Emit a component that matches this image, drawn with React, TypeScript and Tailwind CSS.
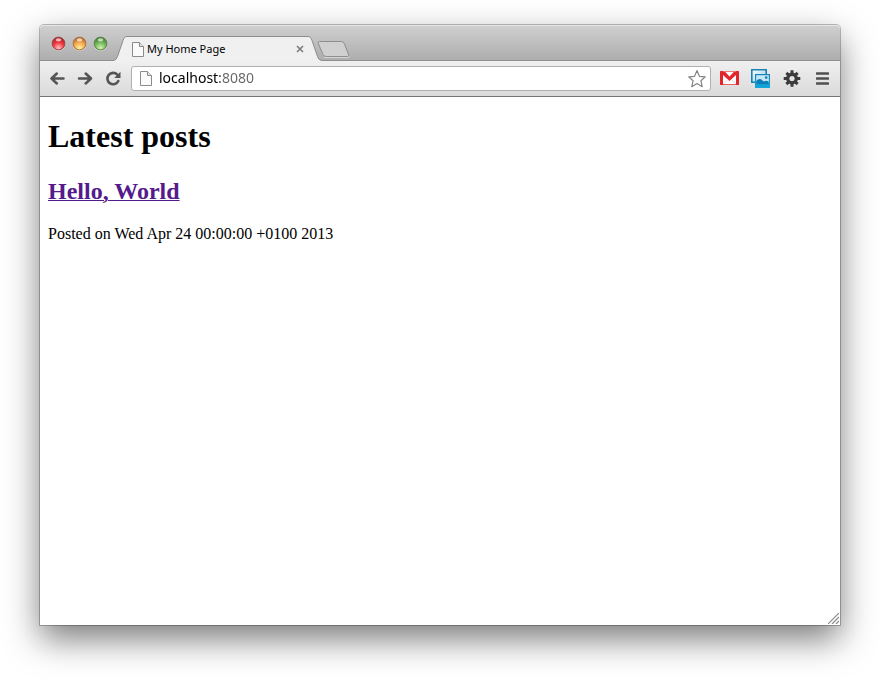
import { useState } from "react";
import type { ReactNode } from "react";

function TrafficLight({ label, id, rim, dark, mid, light }: { label: string; id: string; rim: string; dark: string; mid: string; light: string }) {
  return (
    <button type="button" aria-label={label} className="block size-[15px]">
      <svg viewBox="0 0 15 15" className="block size-[15px]">
        <defs>
          <radialGradient id={id} cx="0.5" cy="0.85" r="0.8">
            <stop offset="0" stopColor={light} />
            <stop offset="0.55" stopColor={mid} />
            <stop offset="1" stopColor={dark} />
          </radialGradient>
        </defs>
        <circle cx="7.5" cy="8.200" r="6.800" fill="#fff" opacity="0.5" />
        <circle cx="7.5" cy="7.500" r="6.400" fill={`url(#${id})`} stroke={rim} />
        <ellipse cx="7.5" cy="3.800" rx="2.800" ry="1.600" fill="#fff" opacity="0.65" />
      </svg>
    </button>
  );
}

function PageIcon() {
  return (
    <svg viewBox="0 0 12 15" className="block h-[15px] w-3 shrink-0">
      <path d="M.5 .5h7l4 4v10H.5z" fill="#fafafa" stroke="#8b8b8b" />
      <path d="M7.5 .5v4h4" fill="#e4e4e4" stroke="#8b8b8b" />
    </svg>
  );
}

function ToolButton({ label, wide, children }: { label: string; wide?: boolean; children: ReactNode }) {
  return (
    <button type="button" aria-label={label} className={`flex h-7 shrink-0 items-center justify-center ${wide ? "w-[31px]" : "w-7"}`}>
      {children}
    </button>
  );
}

function TabStrip() {
  return (
    <div className="flex h-9 items-end rounded-t-[4px] border-t border-[#e6e6e6] bg-linear-to-b from-[#cfcfcf] to-[#adadad] shadow-[inset_0_-1px_0_#8f8f8f]">
      <div className="flex gap-[6px] self-start pt-[10px] pl-[11px]">
        <TrafficLight label="Close" id="lightRed" rim="#9c4648" dark="#a3262b" mid="#f0373c" light="#ffc4c4" />
        <TrafficLight label="Minimise" id="lightAmber" rim="#a8733f" dark="#b5652a" mid="#f6a850" light="#fff3a0" />
        <TrafficLight label="Zoom" id="lightGreen" rim="#5c8550" dark="#3f7a2f" mid="#74b85c" light="#d3f5ab" />
      </div>
      <div className="ml-[5px] flex h-[25px]">
        <svg viewBox="0 0 14 25" className="block h-[25px] w-[14px]">
          <path d="M0 25V24.5C3 24.2 3.7 22.5 4.5 20.5L10 4.5C11 1.7 12 .5 14 .5V25z" fill="#f0f0f0" />
          <path d="M0 24.5C3 24.2 3.7 22.5 4.5 20.5L10 4.5C11 1.7 12 .5 14 .5" fill="none" stroke="#8c8c8c" />
        </svg>
        <div className="flex w-[181px] items-center border-t border-[#8c8c8c] bg-[#f0f0f0] pr-[2px] pl-[5px]">
          <PageIcon />
          <span className="ml-[3px] flex-1 font-['Noto_Sans','Open_Sans',sans-serif] text-[11px] leading-4 text-black">My Home Page</span>
          <button type="button" aria-label="Close tab" className="flex size-3 items-center justify-center">
            <svg viewBox="0 0 8 8" className="block size-2">
              <path d="M1 1l6 6M7 1L1 7" stroke="#7c7c7c" strokeWidth="1.600" />
            </svg>
          </button>
        </div>
        <svg viewBox="0 0 14 25" className="block h-[25px] w-[14px]">
          <path d="M14 25V24.5C11 24.2 10.3 22.5 9.5 20.5L4 4.5C3 1.7 2 .5 0 .5V25z" fill="#f0f0f0" />
          <path d="M14 24.5C11 24.2 10.3 22.5 9.5 20.5L4 4.5C3 1.7 2 .5 0 .5" fill="none" stroke="#8c8c8c" />
        </svg>
      </div>
      <button type="button" aria-label="New tab" className="-ml-[5px] mb-[3px] block">
        <svg viewBox="0 0 33 17" className="block h-[17px] w-[33px]">
          <path d="M7 16.500h23.500q2 0 1.500-1.500" fill="none" stroke="#d6d6d6" />
          <path d="M2.500 .5H24.500Q26.500 .5 27.300 2.500L31.500 13.500Q32.300 15.500 30.500 15.500H9.500Q7 15.500 6 13.500L1.300 2.500Q.6 .5 2.500 .5z" fill="#d0d0d0" stroke="#8e8e8e" />
        </svg>
      </button>
    </div>
  );
}

function Toolbar() {
  const [address, setAddress] = useState("localhost:8080");
  return (
    <div className="flex h-9 items-center border-b border-[#757575] bg-linear-to-b from-[#f0f0f0] to-[#dadada] pr-[2px] pl-[3px]">
      <ToolButton label="Back">
        <svg viewBox="0 0 16 14" className="block h-[14px] w-4">
          <path d="M14.500 6.500H3M7.800 1.500L2.500 6.500L7.800 11.500" fill="none" stroke="#555" strokeWidth="2.500" strokeLinecap="round" strokeLinejoin="round" />
        </svg>
      </ToolButton>
      <ToolButton label="Forward">
        <svg viewBox="0 0 16 14" className="block h-[14px] w-4">
          <path d="M2 6.500H13.500M8.700 1.500L14 6.500L8.700 11.500" fill="none" stroke="#555" strokeWidth="2.500" strokeLinecap="round" strokeLinejoin="round" />
        </svg>
      </ToolButton>
      <ToolButton label="Reload">
        <svg viewBox="0 0 16 16" className="block size-4">
          <path d="M12.300 3.700A5.700 5.700 0 1 0 13.300 10" fill="none" stroke="#555" strokeWidth="2.600" strokeLinecap="round" />
          <path d="M15.500 .8V7H9.200z" fill="#555" />
        </svg>
      </ToolButton>
      <form className="mx-1 mr-[3px] flex h-[25px] flex-1 items-center rounded-[3px] border border-[#b0b0b0] bg-white pr-[3px] pl-2" onSubmit={(e) => e.preventDefault()}>
        <PageIcon />
        <input
          aria-label="Address"
          value={address}
          onChange={(e) => setAddress(e.target.value)}
          className="ml-[7px] h-[23px] min-w-0 flex-1 bg-linear-to-r from-black from-[61px] to-[#666] to-[61px] bg-clip-text pb-[2px] font-['Noto_Sans','Open_Sans',sans-serif] text-[14px] leading-5 text-transparent caret-black outline-none"
        />
        <button type="button" aria-label="Bookmark this page" className="block">
          <svg viewBox="0 0 20 20" className="block size-5">
            <path d="M10 1.500L12.400 7.300L18.300 7.800L13.900 11.700L15.200 17.700L10 14.600L4.800 17.700L6.100 11.700L1.700 7.800L7.600 7.300z" fill="#fff" stroke="#858585" strokeWidth="1.200" strokeLinejoin="round" />
          </svg>
        </button>
      </form>
      <ToolButton label="Gmail" wide>
        <svg viewBox="0 0 19 16" className="block h-4 w-[19px]">
          <rect width="19" height="14" rx="0.500" fill="#e3262b" />
          <path d="M3 13.300V4L9.500 10L16 4V13.300z" fill="#fff" />
          <path d="M5 .8H14L9.500 5.500z" fill="#fff" />
          <path d="M3.500 13L7 9M15.500 13L12 9" stroke="#e3c5c5" strokeWidth="0.700" />
          <path d="M3 .4H16" stroke="#f08a8a" strokeWidth="0.800" />
        </svg>
      </ToolButton>
      <ToolButton label="Photos" wide>
        <svg viewBox="0 0 19 19" className="block size-[19px]">
          <defs>
            <linearGradient id="photoBack" x1="0" y1="0" x2="1" y2="1">
              <stop offset="0" stopColor="#fff" />
              <stop offset="1" stopColor="#8fc9e4" />
            </linearGradient>
            <linearGradient id="photoFrame" x1="0" y1="0" x2="0" y2="1">
              <stop offset="0" stopColor="#1483b8" />
              <stop offset="1" stopColor="#12a8dc" />
            </linearGradient>
          </defs>
          <path d="M.8 .8H15.200V13.200H.8z" fill="url(#photoBack)" stroke="#1a81b2" strokeWidth="1.600" />
          <rect x="4" y="5" width="15" height="14" fill="url(#photoFrame)" />
          <rect x="5.200" y="6.200" width="12.600" height="8.800" fill="#c6e8f6" />
          <path d="M5.200 15V12Q8.500 8.500 11.500 11.500L13 12.500Q15.500 11 17.800 13V15z" fill="#0a7eb8" />
          <circle cx="15.200" cy="8.600" r="1.300" fill="#0b7fb5" />
        </svg>
      </ToolButton>
      <ToolButton label="Extension settings" wide>
        <svg viewBox="-9 -8.500 18 18" className="block size-[18px]">
          <g stroke="#3c3c3c" strokeWidth="3">
            <path d="M0-8.300V8.300M-8.300 0H8.300M-5.600-5.600L5.600 5.600M5.600-5.600L-5.600 5.600" />
          </g>
          <circle r="5.900" fill="#3c3c3c" />
          <circle r="2.600" fill="#e5e5e5" />
        </svg>
      </ToolButton>
      <ToolButton label="Menu" wide>
        <svg viewBox="0 0 13 13" className="block size-[13px]">
          <path d="M1 1.500H12M1 6.500H12M1 11.500H12" stroke="#505050" strokeWidth="2.600" strokeLinecap="round" />
        </svg>
      </ToolButton>
    </div>
  );
}

export default function App() {
  return (
    <div className="flex min-h-screen flex-col overflow-hidden bg-white px-10 pt-[25px] pb-[55px]">
      <div className="flex flex-1 flex-col rounded-t-[4px] bg-white shadow-[0_0_0_1px_rgba(0,0,0,0.25),0_14px_34px_rgba(0,0,0,0.52)]">
        <TabStrip />
        <Toolbar />
        <main className="flex flex-1 flex-col px-2 pt-[21px] font-['Liberation_Serif',serif] text-black">
          <h1 className="text-[32px] leading-[37px] font-bold">Latest posts</h1>
          <h2 className="mt-[22px] text-2xl leading-7 font-bold">
            <a href="#hello-world" className="text-[#551a8b] underline decoration-1">Hello, World</a>
          </h2>
          <p className="mt-5 text-base leading-[18px]">Posted on Wed Apr 24 00:00:00 +0100 2013</p>
          <svg viewBox="0 0 11 11" className="mt-auto mr-[-7px] mb-px block size-[11px] self-end">
            <path d="M0 11L11 0M4 11L11 4M8 11L11 8" stroke="#888" strokeWidth="1.200" />
          </svg>
        </main>
      </div>
    </div>
  );
}
